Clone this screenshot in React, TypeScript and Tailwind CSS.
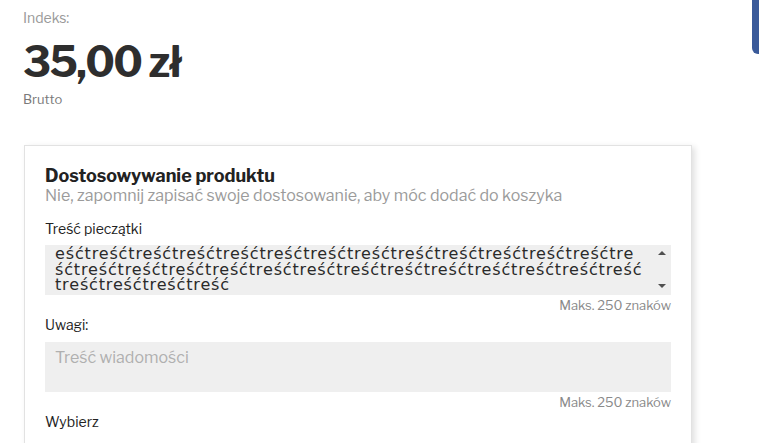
import React from "react";

const franklin = "font-['Libre_Franklin','Roboto','Liberation_Sans',sans-serif]";

const lines = [
  "eść" + "treść".repeat(12) + "tre",
  "ść" + "treść".repeat(13),
  "treść".repeat(4),
];

const App = () => {
  return (
    <div className={`relative min-h-[443px] w-[759px] overflow-hidden bg-white ${franklin}`}>
      <div className="absolute right-0 top-0 h-[54px] w-[7px] rounded-bl-[6px] bg-[#3a5a9a]" />

      <div className="px-[23px] pt-[8px]">
        <div className="text-[14px] leading-[20px] text-[#9a9a9a]">Indeks:</div>
        <div className="mt-[6px] text-[42px] font-bold leading-[56px] tracking-[-1.6px] text-[#2e2e2e]">
          35,00 zł
        </div>
        <div className="mt-[0px] text-[13px] leading-[18px] text-[#7a7a7a]">Brutto</div>

        <div className="ml-[1px] mt-[37px] w-[668px] border border-[#e2e2e2] px-[20px] pb-[20px] pt-[19px] shadow-[3px_2px_6px_rgba(0,0,0,0.12)]">
          <h2 className="text-[18px] font-bold leading-[22px] text-[#222]">Dostosowywanie produktu</h2>
          <p className="text-[16px] leading-[18px] text-[#9b9b9b]">
            Nie, zapomnij zapisać swoje dostosowanie, aby móc dodać do koszyka
          </p>

          <div className="mt-[14px] text-[14px] leading-[20px] text-[#222]">Treść pieczątki</div>
          <div className="relative mt-[6px] h-[50px] overflow-hidden bg-[#efefef] pl-[10px] pt-[1px] font-['DejaVu_Sans','Open_Sans',sans-serif] text-[16px] leading-[15.5px] text-[#2a2a2a]">
            {lines.map((l, i) => (
              <div key={i} className="whitespace-nowrap tracking-[0.85px]">
                {l}
              </div>
            ))}
            <span className="absolute right-[5px] top-[6px] h-0 w-0 border-x-[4px] border-b-[4px] border-x-transparent border-b-[#505050]" />
            <span className="absolute bottom-[7px] right-[5px] h-0 w-0 border-x-[4px] border-t-[4px] border-x-transparent border-t-[#505050]" />
          </div>
          <div className="mt-[2px] text-right text-[13px] leading-[16px] text-[#8a8a8a]">Maks. 250 znaków</div>

          <div className="mt-[2px] text-[14px] leading-[20px] text-[#222]">Uwagi:</div>
          <div className="mt-[7px] h-[50px] bg-[#efefef] pl-[10px] pt-[7px] text-[16px] leading-[18px] text-[#b0b0b0]">
            Treść wiadomości
          </div>
          <div className="mt-[2px] text-right text-[13px] leading-[16px] text-[#8a8a8a]">Maks. 250 znaków</div>

          <div className="mt-[2px] text-[14px] leading-[20px] text-[#222]">Wybierz</div>
        </div>
      </div>
    </div>
  );
};

export default App;
